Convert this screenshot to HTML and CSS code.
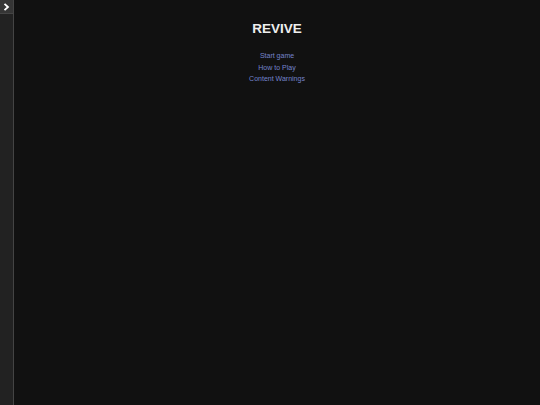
FILE: index.html
```html
<!DOCTYPE html>
<html>
<head>
<meta charset="utf-8">
<link rel="stylesheet" href="styles.css">
</head>
<body>
<div class="page">
  <aside class="ui-bar">
    <button class="toggle" aria-label="Toggle UI bar">
      <svg width="7" height="8" viewBox="0 0 7 8"><path d="M1.5 0.8 L5 4 L1.5 7.2" fill="none" stroke="#fff" stroke-width="1.8"/></svg>
    </button>
  </aside>
  <main class="passage">
    <h1 class="title">REVIVE</h1>
    <ul class="menu">
      <li><a href="#">Start game</a></li>
      <li><a href="#">How to Play</a></li>
      <li><a href="#">Content Warnings</a></li>
    </ul>
  </main>
</div>
</body>
</html>
```
FILE: styles.css
```css
html, body {
  margin: 0;
  padding: 0;
  height: 100%;
}
body {
  background: #111;
  color: #eee;
  font-family: "Liberation Sans", Arial, sans-serif;
}
.page {
  display: flex;
  height: 100%;
}
.ui-bar {
  width: 13px;
  flex: none;
  background: #222;
  border-right: 1px solid #444;
}
.toggle {
  display: flex;
  align-items: center;
  justify-content: center;
  width: 14px;
  height: 14px;
  padding: 0;
  margin: 0;
  background: #353535;
  border: 1px solid #444;
  border-top: none;
  border-left: none;
}
.passage {
  flex: 1;
  text-align: center;
  padding-top: 21px;
}
.title {
  margin: 0 0 13px;
  font-size: 13.5px;
  font-weight: bold;
  line-height: 16px;
  color: #eee;
}
.menu {
  list-style: none;
  margin: 0;
  padding: 0;
  font-size: 7px;
  line-height: 11.7px;
}
.menu a {
  color: #7484cc;
  text-decoration: none;
}
```
